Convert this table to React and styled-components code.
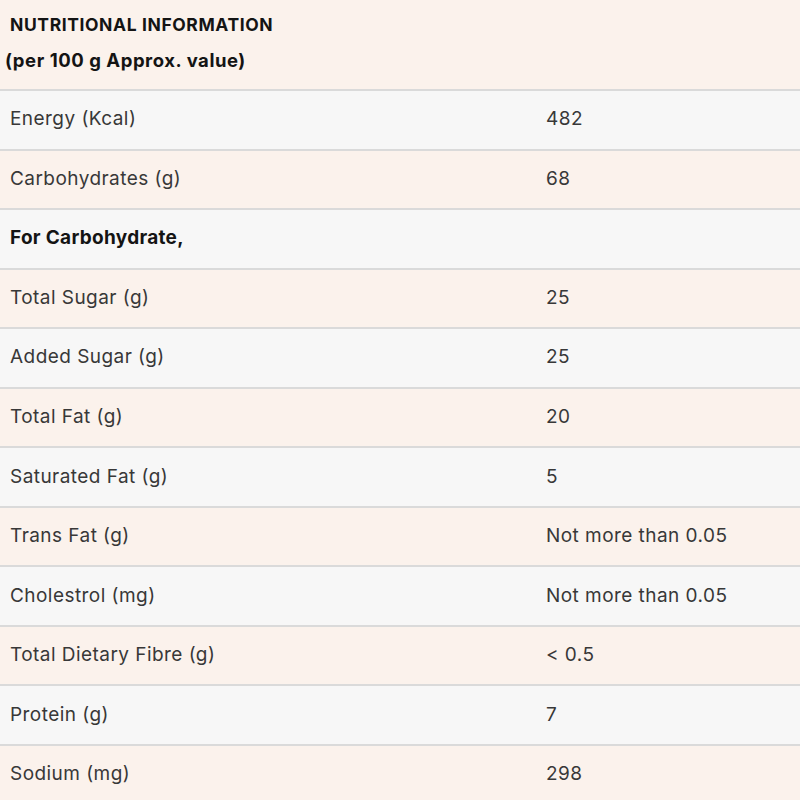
import React from 'react'
import styled, { createGlobalStyle } from 'styled-components'

const GlobalStyle = createGlobalStyle`
  html, body {
    margin: 0;
    padding: 0;
    background: #fbf2ec;
  }
  body {
    font-family: Inter, "Noto Sans", sans-serif;
  }
`

const Table = styled.div`
  width: 800px;
  display: flex;
  flex-direction: column;
`

const Header = styled.div`
  height: 89px;
  box-sizing: border-box;
  background: #fbf2ec;
  padding: 13px 0 0 10px;
  color: #141414;
  font-weight: 700;
`

const Title = styled.div`
  font-size: 17.5px;
  line-height: 24px;
  letter-spacing: 0.6px;
`

const Sub = styled.div`
  font-size: 18.5px;
  line-height: 24px;
  letter-spacing: 0.55px;
  margin: 11px 0 0 -5px;
`

const Row = styled.div`
  display: grid;
  grid-template-columns: 546px 1fr;
  align-items: center;
  height: 59.55px;
  box-sizing: border-box;
  border-top: 2px solid #dadada;
  background: ${p => (p.$shade ? '#f7f7f7' : '#fbf2ec')};
  color: ${p => (p.$bold ? '#141414' : '#383838')};
  font-size: 19px;
  letter-spacing: ${p => (p.$bold ? '0.3px' : '0.45px')};
  font-weight: ${p => (p.$bold ? 700 : 400)};
`

const Label = styled.span`
  padding-left: 10px;
  padding-bottom: 2px;
`

const Value = styled.span`
  padding-bottom: 2px;
`

const rows = [
  ['Energy (Kcal)', '482'],
  ['Carbohydrates (g)', '68'],
  ['For Carbohydrate,', '', true],
  ['Total Sugar (g)', '25'],
  ['Added Sugar (g)', '25'],
  ['Total Fat (g)', '20'],
  ['Saturated Fat (g)', '5'],
  ['Trans Fat (g)', 'Not more than 0.05'],
  ['Cholestrol (mg)', 'Not more than 0.05'],
  ['Total Dietary Fibre (g)', '< 0.5'],
  ['Protein (g)', '7'],
  ['Sodium (mg)', '298'],
]

export default function App() {
  return (
    <>
      <GlobalStyle />
      <Table>
        <Header>
          <Title>NUTRITIONAL INFORMATION</Title>
          <Sub>(per 100 g Approx. value)</Sub>
        </Header>
        {rows.map(([label, value, bold], i) => (
          <Row key={label} $shade={i % 2 === 0} $bold={bold}>
            <Label>{label}</Label>
            <Value>{value}</Value>
          </Row>
        ))}
      </Table>
    </>
  )
}
